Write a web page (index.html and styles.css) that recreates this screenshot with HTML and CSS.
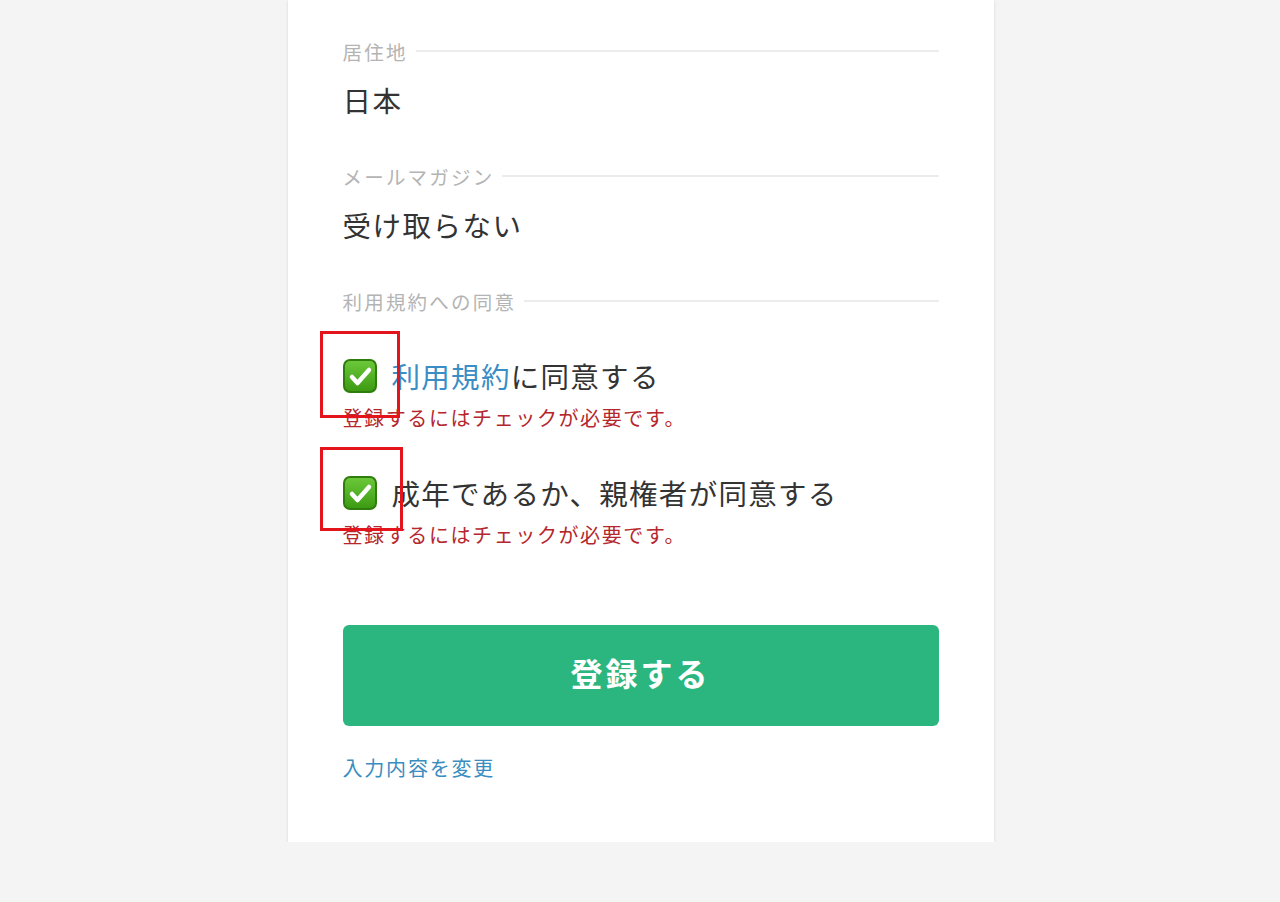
FILE: index.html
```html
<!DOCTYPE html>
<html lang="ja">
<head>
<meta charset="utf-8">
<title>登録内容の確認</title>
<link rel="stylesheet" href="styles.css">
</head>
<body>
<main class="card">
  <section class="field">
    <div class="label"><span>居住地</span></div>
    <div class="value">日本</div>
  </section>
  <section class="field">
    <div class="label"><span>メールマガジン</span></div>
    <div class="value">受け取らない</div>
  </section>
  <section class="field agree">
    <div class="label"><span>利用規約への同意</span></div>
    <div class="check-row first">
      <span class="checkbox"><svg viewBox="0 0 34 34" width="34" height="34"><defs><linearGradient id="g" x1="0" y1="0" x2="0" y2="1"><stop offset="0" stop-color="#6cc93a"/><stop offset="1" stop-color="#3b9a12"/></linearGradient></defs><rect x="1" y="1" width="32" height="32" rx="6" fill="url(#g)" stroke="#2f7d0c" stroke-width="2"/><path d="M9 18 L14.5 24 L26 11" fill="none" stroke="#fff" stroke-width="4.5" stroke-linecap="round" stroke-linejoin="round"/></svg></span>
      <span class="check-text"><a class="link" href="#">利用規約</a>に同意する</span>
      <span class="mark mark1"></span>
    </div>
    <div class="error">登録するにはチェックが必要です。</div>
    <div class="check-row second">
      <span class="checkbox"><svg viewBox="0 0 34 34" width="34" height="34"><rect x="1" y="1" width="32" height="32" rx="6" fill="url(#g)" stroke="#2f7d0c" stroke-width="2"/><path d="M9 18 L14.5 24 L26 11" fill="none" stroke="#fff" stroke-width="4.5" stroke-linecap="round" stroke-linejoin="round"/></svg></span>
      <span class="check-text">成年であるか、親権者が同意する</span>
      <span class="mark mark2"></span>
    </div>
    <div class="error">登録するにはチェックが必要です。</div>
  </section>
  <button class="submit" type="button">登録する</button>
  <a class="back" href="#">入力内容を変更</a>
</main>
</body>
</html>
```
FILE: styles.css
```css
html, body {
  margin: 0;
  padding: 0;
  background: #f4f4f4;
  font-family: "Noto Sans CJK JP", "Liberation Sans", sans-serif;
}

body {
  padding-left: 1px;
}

.card {
  width: 706px;
  box-sizing: border-box;
  margin: 0 auto;
  background: #fff;
  padding: 36px 55px 59px;
  box-shadow: 0 1px 3px rgba(0, 0, 0, 0.12);
  display: flex;
  flex-direction: column;
}

.field {
  display: flex;
  flex-direction: column;
  margin-bottom: 41px;
}

.label {
  display: flex;
  align-items: center;
  height: 30px;
  font-size: 19.5px;
  letter-spacing: 2.2px;
  color: #b4b4b4;
  gap: 8px;
}

.label::after {
  content: "";
  flex: 1;
  height: 2px;
  background: #ececec;
}

.value {
  margin-top: 14px;
  height: 40px;
  line-height: 40px;
  font-size: 28.5px;
  letter-spacing: 1.5px;
  color: #333;
}

.agree {
  margin-bottom: 0;
}

.check-row {
  position: relative;
  display: flex;
  align-items: center;
  height: 40px;
  margin-top: 40px;
}

.checkbox {
  width: 34px;
  height: 34px;
  display: flex;
}

.check-text {
  margin-left: 15px;
  font-size: 28.5px;
  letter-spacing: 1.3px;
  color: #333;
  line-height: 40px;
}

.link {
  color: #3a8dc5;
  text-decoration: none;
}

.error {
  margin-top: 7px;
  height: 30px;
  line-height: 30px;
  font-size: 20px;
  letter-spacing: 1.6px;
  color: #b5272d;
}

.mark {
  position: absolute;
  border: 3px solid #e3141c;
  box-sizing: border-box;
  pointer-events: none;
}

.mark1 {
  left: -23px;
  top: -25px;
  width: 80px;
  height: 87px;
}

.mark2 {
  left: -23px;
  top: -26px;
  width: 83px;
  height: 84px;
}

.submit {
  margin-top: 75px;
  height: 101px;
  padding: 0 0 7px;
  border: none;
  border-radius: 6px;
  background: #2bb67f;
  color: #fff;
  font-family: "Noto Sans CJK JP", "Liberation Sans", sans-serif;
  font-size: 32px;
  font-weight: 700;
  letter-spacing: 3px;
  cursor: pointer;
}

.back {
  margin-top: 27px;
  height: 30px;
  line-height: 30px;
  font-size: 20px;
  letter-spacing: 1.8px;
  color: #3a8dc0;
  text-decoration: none;
  align-self: flex-start;
}
```
